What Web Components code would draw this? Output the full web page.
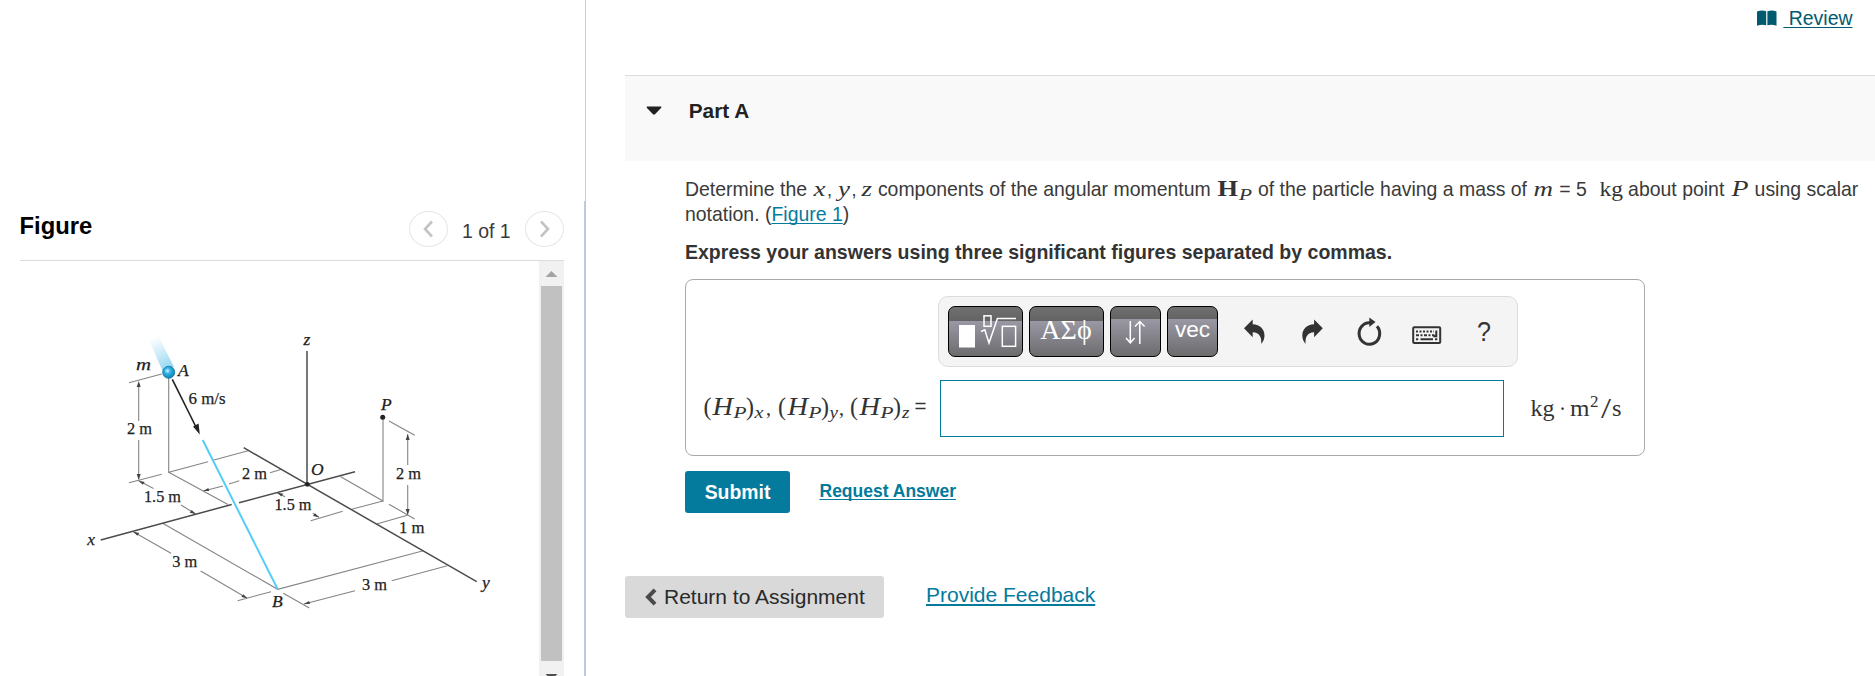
<!DOCTYPE html>
<html lang="en">
<head>
<meta charset="utf-8">
<title>Part A</title>
<style>
    body{
        margin:0;
        height:676px;
        overflow:hidden;
        display:grid;
        grid-template-columns:586px 1fr;
        background:#fff;
        color:#3a3a3a;
        font-family:"Liberation Sans", Arial, sans-serif;
        font-size:19.45px;
        line-height:25px;
    }
</style>
</head>
<body>
<figure-panel heading="Figure" pages="1 of 1">
    <particle-diagram></particle-diagram>
</figure-panel>
<problem-panel>
    <part-header slot="header">Part A</part-header>
    <span slot="prompt">Determine the <math-run name="xyz"></math-run> components of the angular momentum <math-run name="HP"></math-run> of the particle having a mass of <math-run name="m"></math-run> = 5 &nbsp;<math-run name="kg"></math-run> about point <math-run name="P"></math-run> using scalar notation. (<text-link>Figure 1</text-link>)</span>
    <span slot="hint">Express your answers using three significant figures separated by commas.</span>
    <answer-box slot="answer">
        <math-run slot="label" name="label"></math-run>
        <math-run slot="unit" name="unit"></math-run>
    </answer-box>
</problem-panel>

<script>
// each part: text, x, baseline offset, font size, drawn width, style (i italic, b bold, s sans)
const FORMULAS = {
    xyz: {w: 60, parts: [
        ['x', 1.5, 0, 21, 12, 'i'], [',', 15, 0, 19, 5, 's'], ['y', 26, 0, 21, 12, 'i'],
        [',', 39.5, 0, 19, 5, 's'], ['z', 49.5, 0, 21, 10.5, 'i']]},
    HP: {w: 36.5, parts: [['H', 1.5, 0, 23, 20.5, 'b'], ['P', 23, 3.5, 16.5, 13, 'i']]},
    m: {w: 21.5, parts: [['m', 1.5, 0, 21.5, 19.5, 'i']]},
    kg: {w: 25, parts: [['kg', 1.5, 0, 22, 23.5, '']]},
    P: {w: 19.5, parts: [['P', 1.5, 0, 22.5, 17, 'i']]},
    label: {w: 225, parts: [
        ['(', 1.5, 0, 25, 8, ''], ['H', 10.5, 0, 25, 20.5, 'i'], ['P', 31.5, 3, 17.5, 13, 'i'], [')', 44, 0, 25, 8, ''],
        ['x', 52.5, 3, 16.5, 9, 'i'], [',', 64, 0, 20, 5, ''],
        ['(', 76, 0, 25, 8, ''], ['H', 85.5, 0, 25, 20.5, 'i'], ['P', 106.5, 3, 17.5, 13, 'i'], [')', 119, 0, 25, 8, ''],
        ['y', 127.5, 3, 16.5, 8.5, 'i'], [',', 137, 0, 20, 5, ''],
        ['(', 148, 0, 25, 8, ''], ['H', 157.5, 0, 25, 20.5, 'i'], ['P', 178.5, 3, 17.5, 13, 'i'], [')', 191, 0, 25, 8, ''],
        ['z', 200, 3, 16.5, 7.5, 'i'], ['=', 212.5, -2, 20, 12, 's']]},
    unit: {w: 92, parts: [
        ['kg', 0.5, 0, 23.5, 24, ''], ['·', 29, 0, 23.5, 7, ''], ['m', 40, 0, 23.5, 19.5, ''],
        ['2', 60, -9, 17, 8.5, ''], ['/', 71, 2, 29, 10, ''], ['s', 82, 0, 23.5, 9.5, '']]}
};

class MathRun extends HTMLElement {
    constructor(){
        super();
        this.attachShadow({mode: 'open'});
    }

    connectedCallback(){
        const f = FORMULAS[this.getAttribute('name')];
        const parts = f.parts.map(([text, x, y, size, len, kind]) =>
            `<text class="${kind}" x="${x}" y="${y}" font-size="${size}" textLength="${len}" lengthAdjust="spacingAndGlyphs">${text}</text>`
        ).join('');
        this.shadowRoot.innerHTML =
        `
        <style>
            :host{
                display:inline-block;
            }
            svg{
                display:block;
                overflow:visible;
                fill:#333;
                font-family:"Liberation Serif", "Times New Roman", serif;
            }
            .i{ font-style:italic; }
            .b{ font-weight:bold; }
            .s{ font-family:"Liberation Sans", Arial, sans-serif; }
        </style>
        <svg width="${f.w}" height="14" viewBox="0 -14 ${f.w} 14">${parts}</svg>
        `;
    }
}

class TextLink extends HTMLElement {
    constructor(){
        super();
        this.attachShadow({mode: 'open'}).innerHTML =
        `<style>
            :host{
                display:inline;
                color:#047a9c;
            }
            a{
                color:inherit;
                cursor:pointer;
                text-decoration:underline;
                text-decoration-thickness:var(--line, 1px);
                text-underline-offset:2px;
                text-decoration-skip-ink:none;
            }
        </style><a><slot></slot></a>`;
    }
}

class ParticleDiagram extends HTMLElement {
    constructor(){
        super();
        this.attachShadow({mode: 'open'}).innerHTML =
        `
        <style>
            :host{
                display:block;
            }
            svg{
                display:block;
                font-family:"Liberation Serif", "Times New Roman", serif;
                font-size:17.5px;
                fill:#222;
            }
            text{
                stroke:#222;
                stroke-width:.25;
            }
            .thin{ stroke:#858585; stroke-width:1.1; fill:none; }
            .axis{ stroke:#4c4c4c; stroke-width:1.5; fill:none; }
            .i{ font-style:italic; }
        </style>
        <svg width="519" height="415" viewBox="20 261 519 415">
            <defs>
                <linearGradient id="trail" gradientUnits="userSpaceOnUse" x1="152" y1="338" x2="168" y2="370">
                    <stop offset="0" stop-color="#9fdcf5" stop-opacity="0"/>
                    <stop offset="1" stop-color="#8fd3f0"/>
                </linearGradient>
                <radialGradient id="ball" cx=".4" cy=".38" r=".65">
                    <stop offset="0" stop-color="#e2f7ff"/>
                    <stop offset=".35" stop-color="#35b5e8"/>
                    <stop offset="1" stop-color="#0780b8"/>
                </radialGradient>
            </defs>
            <path fill="url(#trail)" d="M148 338L158 335L174 367L163 372Z"/>
            <path class="thin" d="M129 382.7L161.7 374M168.7 378V472.3L208 461.7M213 460.3L249 450.5M168.7 472.3L228 504.5
                M138.7 384V421M138.7 440V479M129 482.7L161.7 474.3M138.7 480.7L153.5 488.5M181 505L195.7 514
                M203.3 491L223 486M229 484L239.3 480.7M270 472.7L281.7 469.3
                M383 417V501L340.7 476.7M389 421L414.7 435.3M407.7 434.3V465M407.7 485V514.3M389 504.3L414.7 519
                M383 501L351.7 509.3M342.7 511.3L310.7 520.7M277.3 492.7L285 496.7M312.7 513.3L319 517.3
                M376.7 524L407.3 515.3M133.3 531.7L171 553.3M200.7 571L247.3 598.3M237.7 600.7L271 591.7
                M162.7 523.3L277.7 589.3L423.3 550.7M283.3 593.3L309.3 608M304 604L355 590.7M391.7 580.7L447.3 565.7"/>
            <path class="axis" d="M243.7 447.7L476.7 581.7M100.7 540L231.7 504.5M239 502.7L355 471.7M307 351V484"/>
            <path fill="#444" d="M138.7 381l-2 6h4zM138.7 480l-2-6h4zM407.7 434l-2 6h4zM407.7 515l-2-6h4z
                M138.7 480.7l6 1.3l-2 2.7zM195.7 514l-6-1.3l2-2.7zM133.3 531.7l6 1.3l-2 2.7zM247.3 598.3l-6-1.3l2-2.7z
                M203.3 491l5-3l1 3zM277.3 492.7l6 1l-2 2.7zM319 517.3l-6-1.3l2-2.7zM304 604l5-3l1 3z"/>
            <path d="M202.7 440L277.7 589.3" stroke="#55cdfa" stroke-width="2"/>
            <path d="M172.3 379.3L196 427" stroke="#222" stroke-width="1.6"/>
            <path d="M199.8 434.5L193 426.5L198.6 423.5Z"/>
            <circle cx="168.7" cy="372.3" r="6" fill="url(#ball)" stroke="#13729c" stroke-width=".8"/>
            <circle cx="307.3" cy="484.3" r="2.4"/>
            <circle cx="382.7" cy="417.3" r="2.5"/>
            <text class="i" x="136" y="370" textLength="15" lengthAdjust="spacingAndGlyphs">m</text>
            <text class="i" x="178" y="375.7">A</text>
            <text x="188.5" y="404" textLength="37" lengthAdjust="spacingAndGlyphs">6 m/s</text>
            <text x="127" y="434" textLength="25" lengthAdjust="spacingAndGlyphs">2 m</text>
            <text x="144" y="501.5" textLength="37" lengthAdjust="spacingAndGlyphs">1.5 m</text>
            <text x="242" y="479" textLength="25" lengthAdjust="spacingAndGlyphs">2 m</text>
            <text x="274.5" y="510" textLength="37" lengthAdjust="spacingAndGlyphs">1.5 m</text>
            <text x="396" y="478.5" textLength="25" lengthAdjust="spacingAndGlyphs">2 m</text>
            <text x="399" y="532.5" textLength="25.5" lengthAdjust="spacingAndGlyphs">1 m</text>
            <text x="172.3" y="567.3" textLength="25" lengthAdjust="spacingAndGlyphs">3 m</text>
            <text x="362" y="590" textLength="25" lengthAdjust="spacingAndGlyphs">3 m</text>
            <text class="i" x="303.5" y="345">z</text>
            <text class="i" x="311" y="474.5">O</text>
            <text class="i" x="381" y="410">P</text>
            <text class="i" x="87.3" y="545">x</text>
            <text class="i" x="482" y="588">y</text>
            <text class="i" x="272" y="606.5">B</text>
        </svg>
        `;
    }
}

class FigurePanel extends HTMLElement {
    constructor(){
        super();
        this.attachShadow({mode: 'open'});
    }

    connectedCallback(){
        this.shadowRoot.innerHTML =
        `
        <style>
            *{
                box-sizing:border-box;
            }
            :host{
                display:flex;
                flex-direction:column;
                height:676px;
                background:linear-gradient(#b8cbe0, #b8cbe0) 584px 201px / 2px 475px no-repeat,
                           linear-gradient(#c3cdd8, #c3cdd8) 585px 0 / 1px 201px no-repeat;
            }
            header{
                display:flex;
                margin:201px 22px 0 20px;
                height:60px;
                border-bottom:1px solid #dcdcdc;
            }
            h2{
                margin:12px auto 0 -.5px;
                font-size:23.8px;
                line-height:25px;
                color:#000;
            }
            .arrow{
                width:39px;
                height:36px;
                margin-top:10px;
                padding:0;
                border:1px solid #e6e6e6;
                border-radius:50%;
                background:#fff;
                display:grid;
                place-items:center;
            }
            .arrow svg{
                fill:none;
                stroke:#c4c4c4;
                stroke-width:2.6;
            }
            .pages{
                margin:18px 15.5px 0 14px;
                width:47.5px;
                white-space:nowrap;
            }
            .body{
                display:flex;
                flex:1;
                min-height:0;
                margin:0 22px 0 20px;
            }
            .view{
                width:519px;
                overflow:hidden;
            }
            .bar{
                width:25px;
                background:#f1f1f1;
                display:flex;
                flex-direction:column;
                align-items:center;
            }
            .bar svg{
                display:block;
                flex:none;
            }
            .thumb{
                flex:none;
                width:21px;
                height:375px;
                background:#c1c1c1;
            }
        </style>
        <header>
            <h2>${this.getAttribute('heading')}</h2>
            <button class="arrow"><svg width="12" height="18"><path d="M9 1.5L2 9L9 16.5"/></svg></button>
            <span class="pages">${this.getAttribute('pages')}</span>
            <button class="arrow"><svg width="12" height="18"><path d="M2 1.5L9 9L2 16.5"/></svg></button>
        </header>
        <div class="body">
            <div class="view"><slot></slot></div>
            <div class="bar">
                <svg width="25" height="25"><path fill="#a3a3a3" d="M6.5 16L12.5 10L18.5 16Z"/></svg>
                <div class="thumb"></div>
                <svg width="25" height="25"><path fill="#505050" d="M6.5 13L18.5 13L12.5 19Z"/></svg>
            </div>
        </div>
        `;
    }
}

class PartHeader extends HTMLElement {
    constructor(){
        super();
        this.attachShadow({mode: 'open'}).innerHTML =
        `
        <style>
            :host{
                display:flex;
                box-sizing:border-box;
                height:86px;
                padding:21px 0 0 21px;
                border-top:1px solid #dcdcdc;
                background:#f9f9f9;
                color:#222;
                font-size:20.8px;
                font-weight:bold;
                line-height:28px;
            }
            svg{
                margin:8px 26.7px 0 0;
            }
        </style>
        <svg width="16" height="12" fill="#222"><path d="M1 1.5H15Q16 2 15 3L9 9.3Q8 10.2 7 9.3L1 3Q0 2 1 1.5Z"/></svg>
        <slot></slot>
        `;
    }
}

class MathToolbar extends HTMLElement {
    constructor(){
        super();
        this.attachShadow({mode: 'open'}).innerHTML =
        `
        <style>
            *{
                box-sizing:border-box;
            }
            :host{
                display:flex;
                box-sizing:border-box;
                width:580px;
                height:71px;
                padding:9px 0 0 9px;
                gap:6px;
                border:1px solid #dcdcdc;
                border-radius:10px;
                background:#f4f4f4;
            }
            .key{
                width:75px;
                height:51px;
                border:1px solid #000;
                border-radius:7px;
                background:linear-gradient(#707070, #636363 14px, #9a98a4 14px, #6c6c6e);
                color:#fff;
                text-align:center;
            }
            .small{
                width:51px;
                background:linear-gradient(#707070, #636363 12px, #9a98a4 12px, #6c6c6e);
            }
            .key svg{
                display:block;
                fill:none;
                stroke:#fff;
                stroke-width:1.5;
            }
            .greek{
                font:28px/46px "Liberation Serif", "Times New Roman", serif;
                text-indent:-1px;
            }
            .vec{
                font-size:22.6px;
                line-height:46px;
            }
            .tools{
                display:block;
                width:270px;
                height:51px;
                fill:#333;
            }
        </style>
        <div class="key">
            <svg width="73" height="49" viewBox="949 307 73 49">
                <rect x="959" y="325" width="16" height="22.5" fill="#fff" stroke="none"/>
                <rect x="984" y="315.8" width="7" height="10.5"/>
                <path d="M981 331.5L984.8 329.8L989 343L997.4 318.5H1016"/>
                <rect x="1002.3" y="326.3" width="13.3" height="20"/>
            </svg>
        </div>
        <div class="key greek">ΑΣϕ</div>
        <div class="key small">
            <svg width="49" height="49" viewBox="1111 307 49 49">
                <path d="M1130.3 321V342.5M1126 338L1130.3 342.8L1134.6 338M1139.8 344V322M1135 326.5L1139.8 321.6L1144.6 326.5"/>
            </svg>
        </div>
        <div class="key small vec">vec</div>
        <svg class="tools" viewBox="1224 306 270 51">
            <path d="M1244 328.3L1252.7 319.5V324.3C1260 324.6 1264.4 329 1264.5 335.5C1264.5 339 1263.2 341.5 1261.2 344C1261.8 337 1259.5 332.7 1252.7 332.3V337.2Z"/>
            <path d="M1322.8 328.3L1314.1 319.5V324.3C1306.8 324.6 1302.4 329 1302.3 335.5C1302.3 339 1303.6 341.5 1305.6 344C1305 337 1307.3 332.7 1314.1 332.3V337.2Z"/>
            <path d="M1377 326.2A10.3 10.8 0 1 1 1370 322.7" fill="none" stroke="#333" stroke-width="3"/>
            <path d="M1369.3 317.5L1375.5 322L1369.3 327Z"/>
            <rect x="1413.2" y="327.3" width="27" height="15.8" rx="1" fill="none" stroke="#333" stroke-width="2"/>
            <path fill="none" stroke="#333" stroke-width="2" d="M1416 331.5H1434" stroke-dasharray="2 1.5"/>
            <path fill="none" stroke="#333" stroke-width="2" d="M1416 335.2H1434.5" stroke-dasharray="3 1.5 2 1.5"/>
            <path fill="none" stroke="#333" stroke-width="2" d="M1416 339.3h2.2M1420.5 339.3h12.5M1435 339.3h2.3M1436.3 330.5v5.7h-3"/>
            <text x="1477" y="341" font-size="27" textLength="14" lengthAdjust="spacingAndGlyphs">?</text>
        </svg>
        `;
    }
}

class AnswerBox extends HTMLElement {
    constructor(){
        super();
        this.attachShadow({mode: 'open'}).innerHTML =
        `
        <style>
            :host{
                display:grid;
                box-sizing:border-box;
                grid-template-columns:236px 580px 1fr;
                grid-template-rows:71px 57px;
                row-gap:13px;
                width:960px;
                height:177px;
                padding:16px 0 0 16px;
                border:1px solid #a9a9a9;
                border-radius:8px;
            }
            math-toolbar{
                grid-column:2;
                grid-row:1;
            }
            .label, .unit{
                grid-row:2;
                padding-top:16px;
            }
            input{
                grid-column:2;
                grid-row:2;
                box-sizing:border-box;
                width:564px;
                height:57px;
                margin:0 0 0 2px;
                border:1px solid #047a9c;
                background:#fff;
            }
            .unit{
                padding-left:12px;
                padding-top:17px;
            }
        </style>
        <math-toolbar></math-toolbar>
        <div class="label"><slot name="label"></slot></div>
        <input type="text">
        <div class="unit"><slot name="unit"></slot></div>
        `;
    }
}

class ProblemPanel extends HTMLElement {
    constructor(){
        super();
        this.attachShadow({mode: 'open'}).innerHTML =
        `
        <style>
            *{
                box-sizing:border-box;
            }
            :host{
                display:flex;
                flex-direction:column;
                padding-left:39px;
                min-width:0;
            }
            .top{
                display:flex;
                justify-content:flex-end;
                gap:6px;
                height:75px;
                padding:6px 22.5px 0 0;
            }
            .top svg{
                margin-top:4px;
            }
            .top text-link{
                color:#005a70;
                white-space:pre;
            }
            .content{
                padding:16px 0 0 60px;
            }
            p{
                margin:0 0 13px;
            }
            .prompt{
                width:1186px;
            }
            .hint{
                margin-bottom:14px;
                font-size:19.52px;
                font-weight:bold;
                color:#333;
            }
            .actions{
                display:flex;
                margin-top:15px;
            }
            button{
                height:42px;
                padding:0;
                border:0;
                border-radius:3px;
                font-family:inherit;
            }
            .submit{
                width:105px;
                background:#047a9c;
                color:#fff;
                font-size:19.4px;
                font-weight:bold;
            }
            .request{
                margin:8px 0 0 29.5px;
                font-size:17.5px;
                font-weight:bold;
            }
            .bottom{
                display:flex;
                margin-top:63px;
            }
            .return{
                display:flex;
                align-items:center;
                gap:7px;
                width:259px;
                padding-left:20px;
                background:#d9d9d9;
                color:#2a2a2a;
                font-size:21px;
                white-space:nowrap;
            }
            .feedback{
                --line:2px;
                margin:6px 0 0 42px;
                font-size:21px;
            }
        </style>
        <div class="top">
            <svg width="20" height="17" viewBox="0 0 20 17"><path fill="#005a70" d="M0 1.5Q5 -.5 9.2 1.3V15.3Q5 14 0 15.8ZM10.4 1.3Q15 -.5 19.5 1.5V15.8Q15 14 10.4 15.3Z"/></svg>
            <text-link>&nbsp;Review</text-link>
        </div>
        <slot name="header"></slot>
        <div class="content">
            <p class="prompt"><slot name="prompt"></slot></p>
            <p class="hint"><slot name="hint"></slot></p>
            <slot name="answer"></slot>
            <div class="actions">
                <button class="submit">Submit</button>
                <text-link class="request">Request Answer</text-link>
            </div>
        </div>
        <div class="bottom">
            <button class="return">
                <svg width="12" height="18"><path d="M10 1.8L3 9L10 16.2" fill="none" stroke="#4a4a4a" stroke-width="4"/></svg>
                <span>Return to Assignment</span>
            </button>
            <text-link class="feedback">Provide Feedback</text-link>
        </div>
        `;
    }
}

customElements.define('math-run', MathRun);
customElements.define('text-link', TextLink);
customElements.define('particle-diagram', ParticleDiagram);
customElements.define('figure-panel', FigurePanel);
customElements.define('part-header', PartHeader);
customElements.define('math-toolbar', MathToolbar);
customElements.define('answer-box', AnswerBox);
customElements.define('problem-panel', ProblemPanel);
</script>
</body>
</html>
